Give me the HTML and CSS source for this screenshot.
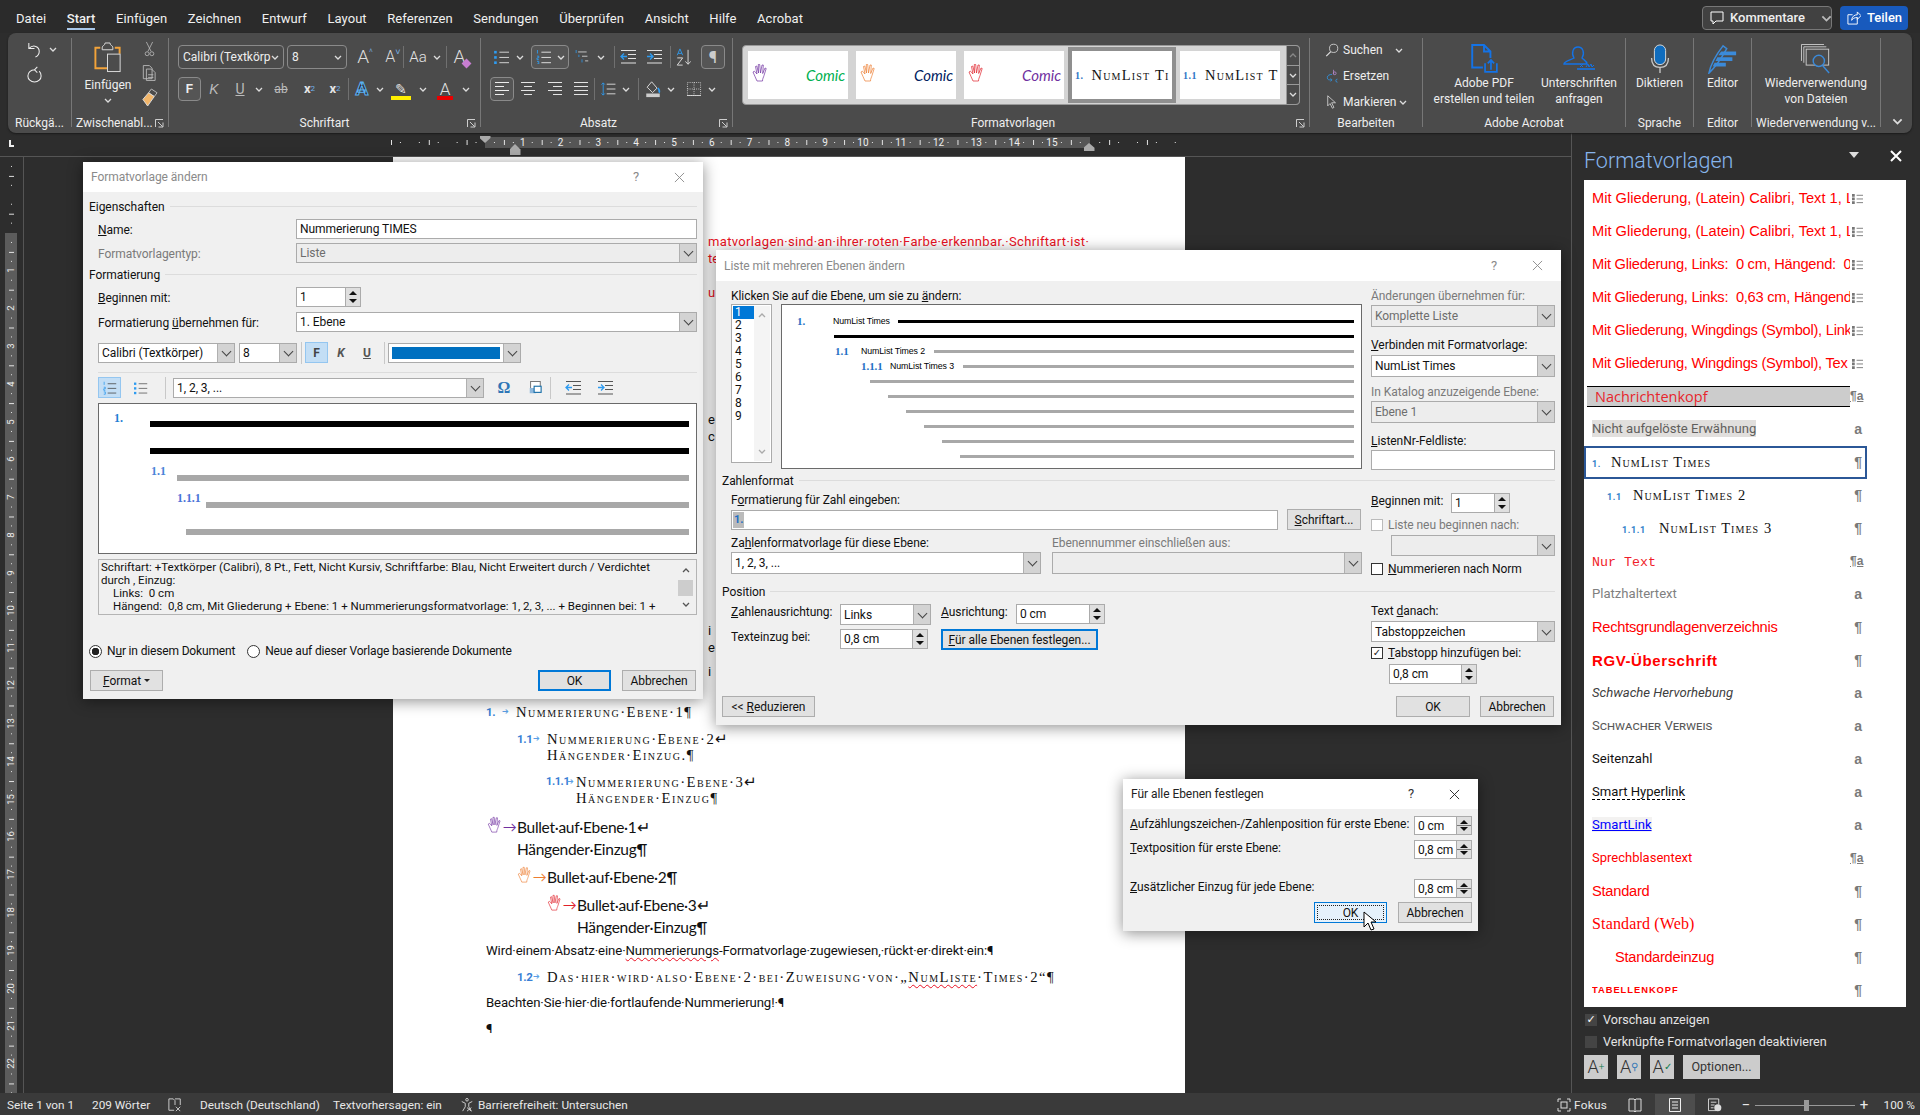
FILE: index.html
```html
<!DOCTYPE html>
<html lang="de">
<head>
<meta charset="utf-8">
<title>Word</title>
<link rel="stylesheet" href="styles.css">
</head>
<body>
<svg class="sprite" aria-hidden="true">
<symbol id="chev" viewBox="0 0 8 5"><path d="M1 1l3 3 3-3" fill="none" stroke="currentColor" stroke-width="1.3"/></symbol>
<symbol id="hand" viewBox="0 0 16 19"><path d="M5 18C4 15 2 12 1 9l1.500-.8L5 11 3.500 3.500l1.300-.5L6.500 10 6.300 1.500h1.400L8.500 10 10 2h1.300l-.6 8.500L13 5l1.200.5-2.200 7c-.5 2-1.500 3-1.500 5.500z" fill="none" stroke="currentColor" stroke-width=".7"/></symbol>
<symbol id="undo" viewBox="0 0 18 18"><path d="M3 2v6h6M3 8c5-5 11-2 11 3 0 3-2 5-4 6" fill="none" stroke="currentColor" stroke-width="1.100"/></symbol>
<symbol id="redo" viewBox="0 0 18 18"><path d="M12 1l-3 3 3 3M9 4c-4 0-7 3-7 6.500S5 17 9 17s7-3 7-6.500c0-2-1-4-2-5" fill="none" stroke="currentColor" stroke-width="1.100"/></symbol>
<symbol id="paste" viewBox="0 0 30 32"><path d="M7 6H2v21h12" fill="none" stroke="#f2a33a" stroke-width="2"/><path d="M22 6h5v6" fill="none" stroke="#f2a33a" stroke-width="2"/><path d="M9 6c0-3 3-2 3-5h5c0 3 3 2 3 5v2H9z" fill="none" stroke="#ddd"/><rect x="14.500" y="12.500" width="13" height="18" fill="#4c4c4c" stroke="#ddd"/></symbol>
<symbol id="cut" viewBox="0 0 14 20"><path d="M3 1l6 12M11 1L5 13" stroke="currentColor" fill="none"/><circle cx="4" cy="16" r="2.500" fill="none" stroke="currentColor"/><circle cx="10" cy="16" r="2.500" fill="none" stroke="currentColor"/></symbol>
<symbol id="copy" viewBox="0 0 16 20"><path d="M1.500 1.500h7l3 3v12h-10z M5 5.500h6l4 4v9H5z" fill="#4c4c4c" stroke="currentColor"/><path d="M7 12h6M7 15h6" stroke="currentColor"/></symbol>
<symbol id="painter" viewBox="0 0 18 20"><path d="M11 1l6 4-3 4-6-4z" fill="none" stroke="currentColor"/><path d="M8 5L2 12l5 7 7-10z" fill="#f2b66a" stroke="#ddd"/></symbol>
<symbol id="bullets" viewBox="0 0 18 16"><rect x="0" y="1" width="3" height="3" fill="#2e9bf0"/><rect x="0" y="7" width="3" height="3" fill="#2e9bf0"/><rect x="0" y="13" width="3" height="3" fill="#2e9bf0"/><path d="M6 2.500h11M6 8.500h11M6 14.500h11" stroke="currentColor"/></symbol>
<symbol id="numbered" viewBox="0 0 18 16"><path d="M1.500 0v4M1 7h2v2H1v2h2M1 13h2v3H1" stroke="#2e9bf0" fill="none"/><path d="M6 2.500h11M6 8.500h11M6 14.500h11" stroke="currentColor"/></symbol>
<symbol id="multi" viewBox="0 0 18 18"><path d="M1.500 0v4M5 6v3M9 12v4" stroke="#2e9bf0" fill="none"/><path d="M4 2.500h11M9 8h7M13 14h4" stroke="currentColor"/></symbol>
<symbol id="outdent" viewBox="0 0 16 14"><path d="M1 .5h15M8 4.500h8M8 8.500h8M1 13h15" stroke="currentColor"/><path d="M7 6.500H1m3-3l-3 3 3 3" stroke="#2e9bf0" fill="none" stroke-width="1.300"/></symbol>
<symbol id="indent" viewBox="0 0 16 14"><path d="M1 .5h15M8 4.500h8M8 8.500h8M1 13h15" stroke="currentColor"/><path d="M1 6.500h6m-3-3l3 3-3 3" stroke="#2e9bf0" fill="none" stroke-width="1.300"/></symbol>
<symbol id="sort" viewBox="0 0 17 20"><path d="M13 2v16m-3-3l3 3 3-3" stroke="currentColor" fill="none"/><path d="M1 8l3-7 3 7M2 6h4" stroke="#2e9bf0" fill="none"/><path d="M1 11h6l-6 8h6" stroke="currentColor" fill="none"/></symbol>
<symbol id="al" viewBox="0 0 16 14"><path d="M1 .5h14M1 4.500h9M1 8.500h14M1 12.500h9" stroke="currentColor"/></symbol>
<symbol id="ac" viewBox="0 0 16 14"><path d="M1 .5h14M4 4.500h8M1 8.500h14M4 12.500h8" stroke="currentColor"/></symbol>
<symbol id="ar" viewBox="0 0 16 14"><path d="M1 .5h14M6 4.500h9M1 8.500h14M6 12.500h9" stroke="currentColor"/></symbol>
<symbol id="aj" viewBox="0 0 16 14"><path d="M1 .5h14M1 4.500h14M1 8.500h14M1 12.500h14" stroke="currentColor"/></symbol>
<symbol id="lsp" viewBox="0 0 17 16"><path d="M3 1v14M1 3l2-2 2 2M1 13l2 2 2-2" stroke="#2e9bf0" fill="none"/><path d="M7 2.500h10M7 8h10M7 13.500h10" stroke="currentColor"/></symbol>
<symbol id="shade" viewBox="0 0 17 20"><path d="M7 2l6 7-5 5-6-6z" fill="none" stroke="currentColor"/><path d="M14 9c2 3 2 4 1 5" stroke="#2e9bf0" fill="none" stroke-width="2"/><rect x="1" y="15" width="15" height="4" fill="#ccc"/></symbol>
<symbol id="borders" viewBox="0 0 16 16"><path d="M.5.500h15v15H.500zM8 .500v15M.500 8h15" fill="none" stroke="currentColor" stroke-dasharray="1 1.500"/><path d="M0 15.500h16" stroke="currentColor"/></symbol>
<symbol id="launch" viewBox="0 0 9 9"><path d="M.5 8V.500H8M3 3l4.500 4.500M3.500 8H8V3.500" fill="none" stroke="currentColor" stroke-width=".9"/></symbol>
<symbol id="search" viewBox="0 0 17 17"><circle cx="10.500" cy="6.500" r="5" fill="none" stroke="currentColor"/><path d="M7 10.500L1.500 16" stroke="currentColor" stroke-width="1.500"/></symbol>
<symbol id="replace" viewBox="0 0 16 18"><path d="M8 7c-3 0-6 1-6 4s2 3 5 3" fill="none" stroke="#2e9bf0"/><path d="M6 12l2 2-2 2" fill="none" stroke="#2e9bf0"/><path d="M10 1v6" stroke="#b88bd0"/><circle cx="11.500" cy="5.500" r="1.800" fill="none" stroke="#b88bd0"/><path d="M15 13a2 2 0 1 0 0 4" fill="none" stroke="#2e9bf0"/></symbol>
<symbol id="cursor" viewBox="0 0 13 18"><path d="M1 1v13l3-3 3 6 2-1-3-6h5z" fill="none" stroke="currentColor"/></symbol>
<symbol id="pdf" viewBox="0 0 26 28"><path d="M12 22H2V1h11l6 6v6M13 1v6h6" fill="none" stroke="#1473e6" stroke-width="1.800"/><path d="M14 18v8h11v-8M19.500 24v-9m-3 3l3-3 3 3" fill="none" stroke="#1473e6" stroke-width="1.600"/></symbol>
<symbol id="sign" viewBox="0 0 32 28"><path d="M11 12c-3-5-1-11 4-11s7 6 4 11c2 2 5 3 5 6H1c0-3 7-4 10-6z" transform="translate(0 1)" fill="none" stroke="#1473e6" stroke-width="1.400"/><path d="M14 24h18" stroke="#1473e6" stroke-width="1.600"/><path d="M17 19l3 3m0-3l-3 3M23 22l2-3 1 3 2-3 1 3 2-2" fill="none" stroke="#1473e6"/></symbol>
<symbol id="mic" viewBox="0 0 22 32"><rect x="5" y="1" width="12" height="21" rx="6" fill="#0f6cbd" stroke="#ddd"/><path d="M2 15c0 8 4 10 9 10s9-2 9-10M11 25v6" fill="none" stroke="#ccc" stroke-width="1.400"/></symbol>
<symbol id="pen" viewBox="0 0 32 32"><path d="M1 31c2-10 8-20 15-29l4 3C15 14 9 24 1 31z" fill="none" stroke="#3b8ad9" stroke-width="1.600"/><path d="M14 8h16v4H11zM10 14h16v4H8zM7 20h12v4H5z" fill="#3b8ad9"/></symbol>
<symbol id="reuse" viewBox="0 0 32 32"><path d="M.5 18V.500h24M3 20V3h24" fill="none" stroke="#ccc"/><rect x="5.500" y="5.500" width="24" height="17" fill="none" stroke="#ccc"/><circle cx="19" cy="18" r="6" fill="#4c4c4c" stroke="#3b8ad9" stroke-width="1.500"/><path d="M23 23l7 8" stroke="#3b8ad9" stroke-width="1.500"/></symbol>
<symbol id="close" viewBox="0 0 12 12"><path d="M1 1l10 10M11 1L1 11" fill="none" stroke="currentColor" stroke-width="1"/></symbol>
<symbol id="closeb" viewBox="0 0 12 12"><path d="M1 1l10 10M11 1L1 11" fill="none" stroke="currentColor" stroke-width="2"/></symbol>
<symbol id="pcol" viewBox="0 0 12 12"><path d="M0 1h3v3H0zM0 5h3v3H0zM0 9h3v3H0z" fill="#777"/><path d="M5 2.500h7M5 6.500h7M5 10.500h7" stroke="#777"/></symbol>
<symbol id="bubble" viewBox="0 0 14 14"><path d="M1 1h12v9H6l-3 3v-3H1z" fill="none" stroke="#fff"/></symbol>
<symbol id="share" viewBox="0 0 15 15"><path d="M11 7v7H1V4h5" fill="none" stroke="#fff"/><path d="M5 10c0-4 3-6 6-6V1l4 4-4 4V7c-3 0-5 1-6 3z" fill="none" stroke="#fff"/></symbol>
<symbol id="book" viewBox="0 0 14 14"><path d="M1 1h5l1 1 1-1h5v12H8l-1 1-1-1H1zM7 2v11" fill="none" stroke="#ddd"/></symbol>
<symbol id="page" viewBox="0 0 12 14"><path d="M.5.500h11v13H.500zM3 4h6M3 7h6M3 10h6" fill="none" stroke="#eee"/></symbol>
<symbol id="web" viewBox="0 0 15 14"><path d="M9 13H.500V.500h11v6M3 4h6M3 7h4M3 10h3" fill="none" stroke="#ddd"/><circle cx="10.500" cy="10" r="3.800" fill="#ddd"/></symbol>
<symbol id="spell" viewBox="0 0 16 16"><path d="M7 14H1V1h5l2 2v5M8 1h6v7" fill="none" stroke="#ddd"/><path d="M9 10l5 5m0-5l-5 5" stroke="#ddd"/></symbol>
<symbol id="acc" viewBox="0 0 14 16"><circle cx="7" cy="2" r="1.500" fill="none" stroke="#ddd"/><path d="M1 4l4 2v4l-3 5M13 4L9 6v4l3 5" fill="none" stroke="#ddd"/><path d="M7 11l5 4m0-4l-5 4" stroke="#ddd"/></symbol>
<symbol id="focus" viewBox="0 0 14 14"><path d="M1 4V1h3M10 1h3v3M13 10v3h-3M4 13H1v-3" fill="none" stroke="#ddd"/><rect x="4" y="4" width="6" height="6" fill="none" stroke="#ddd"/></symbol>
<symbol id="mouse" viewBox="0 0 13 20"><path d="M1 1v15l4-4 3 7 3-1-3-7h5z" fill="#fff" stroke="#000"/></symbol>
<symbol id="symicon" viewBox="0 0 16 16"><rect x="3" y=".5" width="11" height="11" fill="#fff" stroke="#666"/><path d="M2 8h7v6H2z" fill="#8fb8dc"/><rect x="7" y="6" width="8" height="7" fill="#fff" stroke="#1a6fa8" stroke-width="1.300"/></symbol>
</svg>

<div class="app">
  <header class="topbar">
    <nav class="tabs">
      <span>Datei</span><span class="tab-on">Start</span><span>Einfügen</span><span>Zeichnen</span><span>Entwurf</span><span>Layout</span><span>Referenzen</span><span>Sendungen</span><span>Überprüfen</span><span>Ansicht</span><span>Hilfe</span><span>Acrobat</span>
    </nav>
    <div class="top-actions">
      <span class="btn-comments"><svg class="i14"><use href="#bubble"/></svg><b>Kommentare</b><svg class="chv-l"><use href="#chev"/></svg></span>
      <span class="btn-share"><svg class="i14"><use href="#share"/></svg><b>Teilen</b></span>
    </div>
  </header>

  <section class="ribbon">
    <div class="group g1">
      <div class="g-body g1-body">
        <div class="row-s"><svg class="i17"><use href="#undo"/></svg><svg class="chv"><use href="#chev"/></svg></div>
        <svg class="i17"><use href="#redo"/></svg>
      </div>
      <div class="g-label">Rückgä...</div>
    </div>
    <div class="group g2">
      <div class="g-body g2-body">
        <div class="paste-col"><svg class="paste"><use href="#paste"/></svg><span>Einfügen</span><svg class="chv"><use href="#chev"/></svg></div>
        <div class="clip-col"><svg class="i-cut"><use href="#cut"/></svg><svg class="i-copy"><use href="#copy"/></svg><svg class="i-paint"><use href="#painter"/></svg></div>
      </div>
      <div class="g-label g-label-l">Zwischenabl...</div>
      <svg class="launch"><use href="#launch"/></svg>
    </div>
    <div class="group g3">
      <div class="g-body g3-body">
        <div class="rrow">
          <span class="rsel w106"><span class="clip">Calibri (Textkörp</span><svg class="chv"><use href="#chev"/></svg></span>
          <span class="rsel w60 ml3">8<svg class="chv"><use href="#chev"/></svg></span>
          <span class="b b36 big-a">A<small>^</small></span><span class="b b20 big-a sm">A<small>˅</small></span><i class="rsep"></i>
          <span class="b b42 aa">Aa<svg class="chv"><use href="#chev"/></svg></span><i class="rsep"></i>
          <span class="b b30 big-a lt">A<em class="eraser"></em></span>
        </div>
        <div class="rrow r2">
          <span class="bx b23 fb">F</span><span class="b b26 ki">K</span><span class="b b26 un">U</span><span class="b b12"><svg class="chv"><use href="#chev"/></svg></span>
          <span class="b b32 strike">ab</span><span class="b b25 sc">x<sub>2</sub></span><span class="b b26 sc">x<sup>2</sup></span><i class="rsep"></i>
          <span class="b b26 fx">A</span><span class="b b10"><svg class="chv"><use href="#chev"/></svg></span>
          <span class="b b32 hl">✎</span><span class="b b12"><svg class="chv"><use href="#chev"/></svg></span>
          <span class="b b32 fc">A</span><span class="b b10"><svg class="chv"><use href="#chev"/></svg></span>
        </div>
      </div>
      <div class="g-label">Schriftart</div>
      <svg class="launch"><use href="#launch"/></svg>
    </div>
    <div class="group g4">
      <div class="g-body g4-body">
        <div class="rrow">
          <span class="b b24"><svg class="i16"><use href="#bullets"/></svg></span><span class="b b12"><svg class="chv"><use href="#chev"/></svg></span>
          <span class="bx b38 ml5"><svg class="i16"><use href="#numbered"/></svg><svg class="chv"><use href="#chev"/></svg></span>
          <span class="b b26"><svg class="i16"><use href="#multi"/></svg></span><span class="b b12"><svg class="chv"><use href="#chev"/></svg></span><i class="rsep ml7"></i>
          <span class="b b26"><svg class="i16"><use href="#outdent"/></svg></span><span class="b b26"><svg class="i16"><use href="#indent"/></svg></span><i class="rsep ml3"></i>
          <span class="b b26"><svg class="i16 tall"><use href="#sort"/></svg></span>
          <span class="bx b24 ml4 pil">¶</span>
        </div>
        <div class="rrow r2">
          <span class="bx b24"><svg class="i16"><use href="#al"/></svg></span><span class="b b27"><svg class="i16"><use href="#ac"/></svg></span><span class="b b27"><svg class="i16"><use href="#ar"/></svg></span><span class="b b26"><svg class="i16"><use href="#aj"/></svg></span><i class="rsep"></i>
          <span class="b b26"><svg class="i16"><use href="#lsp"/></svg></span><span class="b b10"><svg class="chv"><use href="#chev"/></svg></span><i class="rsep ml7"></i>
          <span class="b b27"><svg class="i16 tall"><use href="#shade"/></svg></span><span class="b b10"><svg class="chv"><use href="#chev"/></svg></span>
          <span class="b b26 ml5"><svg class="i16"><use href="#borders"/></svg></span><span class="b b10"><svg class="chv"><use href="#chev"/></svg></span>
        </div>
      </div>
      <div class="g-label g4-label">Absatz</div>
      <svg class="launch"><use href="#launch"/></svg>
    </div>
    <div class="group g5">
      <div class="g-body g5-body">
        <div class="gallery">
          <div class="gitem"><svg class="hand c-purple"><use href="#hand"/></svg><span class="comic c-green">Comic</span></div>
          <div class="gitem"><svg class="hand c-orange"><use href="#hand"/></svg><span class="comic c-navy">Comic</span></div>
          <div class="gitem"><svg class="hand c-red"><use href="#hand"/></svg><span class="comic c-violet">Comic</span></div>
          <div class="gitem gsel"><b class="gnum">1.</b><span class="gnl">NumList Ti</span></div>
          <div class="gitem"><b class="gnum">1.1</b><span class="gnl">NumList T</span></div>
          <div class="gscroll"><span class="off"><svg class="chv up"><use href="#chev"/></svg></span><span><svg class="chv"><use href="#chev"/></svg></span><span><svg class="chv"><use href="#chev"/></svg></span></div>
        </div>
      </div>
      <div class="g-label g5-label">Formatvorlagen</div>
      <svg class="launch"><use href="#launch"/></svg>
    </div>
    <div class="group g6">
      <div class="g-body g6-body">
        <div class="edit-row"><svg class="i16"><use href="#search"/></svg><span>Suchen</span><svg class="chv ml9"><use href="#chev"/></svg></div>
        <div class="edit-row"><svg class="i16"><use href="#replace"/></svg><span>Ersetzen</span></div>
        <div class="edit-row"><svg class="i16"><use href="#cursor"/></svg><span>Markieren</span><svg class="chv"><use href="#chev"/></svg></div>
      </div>
      <div class="g-label">Bearbeiten</div>
    </div>
    <div class="group g7">
      <div class="g-body g7-body">
        <div class="bigbtn w112"><svg class="bigi"><use href="#pdf"/></svg><span>Adobe PDF<br>erstellen und teilen</span></div>
        <div class="bigbtn w78"><svg class="bigi"><use href="#sign"/></svg><span>Unterschriften<br>anfragen</span></div>
      </div>
      <div class="g-label">Adobe Acrobat</div>
    </div>
    <div class="group g8">
      <div class="g-body"><div class="bigbtn"><svg class="bigi"><use href="#mic"/></svg><span>Diktieren</span></div></div>
      <div class="g-label">Sprache</div>
    </div>
    <div class="group g9">
      <div class="g-body"><div class="bigbtn"><svg class="bigi"><use href="#pen"/></svg><span>Editor</span></div></div>
      <div class="g-label">Editor</div>
    </div>
    <div class="group g10">
      <div class="g-body"><div class="bigbtn"><svg class="bigi"><use href="#reuse"/></svg><span>Wiederverwendung<br>von Dateien</span></div></div>
      <div class="g-label">Wiederverwendung v...</div>
    </div>
    <svg class="collapse"><use href="#chev"/></svg>
  </section>

  <main class="workspace">
    <div class="docarea">
      <div class="hruler">
        <span class="corner"></span>
        <div class="hr-track">
          <div class="hr-band">
            <span>1</span><span>2</span><span>3</span><span>4</span><span>5</span><span>6</span><span>7</span><span>8</span><span>9</span><span>10</span><span>11</span><span>12</span><span>13</span><span>14</span><span>15</span>
          </div>
          <i class="mk mk-a"></i><i class="mk mk-b"></i><i class="mk mk-c"></i>
        </div>
      </div>
      <div class="docrow">
        <div class="vruler">
          <div class="vr-track"><div class="vr-band">
            <span>1</span><span>2</span><span>3</span><span>4</span><span>5</span><span>6</span><span>7</span><span>8</span><span>9</span><span>10</span><span>11</span><span>12</span><span>13</span><span>14</span><span>15</span><span>16</span><span>17</span><span>18</span><span>19</span><span>20</span><span>21</span><span>22</span>
          </div></div>
        </div>
        <article class="page">
          <div class="peek">
            <p class="pk-1">matvorlagen·sind·an·ihrer·roten·Farbe·erkennbar.·Schriftart·ist·</p>
            <p>te</p>
            <p class="pk-2">u</p>
            <p class="pk-3 blk">e</p>
            <p class="blk">c</p>
            <p class="pk-4 blk">i</p>
            <p class="blk">e</p>
            <p class="pk-5 blk">i</p>
          </div>
          <div class="li l1"><b class="n">1.</b><b class="ar">➔</b><span class="sc-t">Nummerierung·Ebene·1¶</span></div>
          <div class="li l2 gap11"><b class="n">1.1</b><b class="ar">➔</b><span class="sc-t">Nummerierung·Ebene·2↵<br>Hängender·Einzug.¶</span></div>
          <div class="li l3 gap11"><b class="n">1.1.1</b><b class="ar">➔</b><span class="sc-t">Nummerierung·Ebene·3↵<br>Hängender·Einzug¶</span></div>
          <div class="li bl l1 gap10 c-green"><svg class="hand c-purple"><use href="#hand"/></svg><span class="ba c-purple">→</span><span>Bullet·auf·Ebene·1↵<br>Hängender·Einzug¶</span></div>
          <div class="li bl l2 gap6 c-navy"><svg class="hand c-orange"><use href="#hand"/></svg><span class="ba c-orange">→</span><span>Bullet·auf·Ebene·2¶</span></div>
          <div class="li bl l3 gap6 c-violet"><svg class="hand c-red"><use href="#hand"/></svg><span class="ba c-red">→</span><span>Bullet·auf·Ebene·3↵<br>Hängender·Einzug¶</span></div>
          <p class="body-p gap5">Wird·einem·Absatz·eine·<u class="wavy">Nummerierungs</u>-Formatvorlage·zugewiesen,·rückt·er·direkt·ein:¶</p>
          <div class="li l2 gap10"><b class="n">1.2</b><b class="ar">➔</b><span class="sc-t">Das·hier·wird·also·Ebene·2·bei·Zuweisung·von·„<u class="wavy">NumListe</u>·Times·2“¶</span></div>
          <p class="body-p gap10">Beachten·Sie·hier·die·fortlaufende·Nummerierung!·¶</p>
          <p class="body-p gap10">¶</p>
        </article>
      </div>
    </div>

    <aside class="pane">
      <div class="pane-head"><span class="pane-title">Formatvorlagen</span><i class="pane-drop"></i><svg class="pane-x"><use href="#closeb"/></svg></div>
      <ul class="slist">
        <li class="r s-ar s-mit"><span class="sn">Mit Gliederung, (Latein) Calibri, Text 1, L</span><svg class="sy-i"><use href="#pcol"/></svg></li>
        <li class="r s-ar s-mit"><span class="sn">Mit Gliederung, (Latein) Calibri, Text 1, L</span><svg class="sy-i"><use href="#pcol"/></svg></li>
        <li class="r s-ar"><span class="sn">Mit Gliederung, Links:&nbsp; 0 cm, Hängend:&nbsp; 0</span><svg class="sy-i"><use href="#pcol"/></svg></li>
        <li class="r s-ar"><span class="sn">Mit Gliederung, Links:&nbsp; 0,63 cm, Hängend</span><svg class="sy-i"><use href="#pcol"/></svg></li>
        <li class="r s-ar"><span class="sn">Mit Gliederung, Wingdings (Symbol), Link</span><svg class="sy-i"><use href="#pcol"/></svg></li>
        <li class="r s-ar"><span class="sn">Mit Gliederung, Wingdings (Symbol), Tex</span><svg class="sy-i"><use href="#pcol"/></svg></li>
        <li class="r"><span class="sn s-news"><span>Nachrichtenkopf</span></span><em class="sy sy-u">¶a</em></li>
        <li class="r"><span class="sn s-seg"><mark class="s-mention">Nicht aufgelöste Erwähnung</mark></span><em class="sy">a</em></li>
        <li class="r r-sel"><span class="sn s-nl"><b class="sl-n sw19">1.</b>NumList Times</span><em class="sy">¶</em></li>
        <li class="r"><span class="sn s-nl ind15"><b class="sl-n sw26">1.1</b>NumList Times 2</span><em class="sy">¶</em></li>
        <li class="r"><span class="sn s-nl ind30"><b class="sl-n sw37">1.1.1</b>NumList Times 3</span><em class="sy">¶</em></li>
        <li class="r"><span class="sn s-mono">Nur Text</span><em class="sy sy-u">¶a</em></li>
        <li class="r"><span class="sn s-seg s-gray">Platzhaltertext</span><em class="sy">a</em></li>
        <li class="r s-ar"><span class="sn">Rechtsgrundlagenverzeichnis</span><em class="sy">¶</em></li>
        <li class="r"><span class="sn s-rgv">RGV-Überschrift</span><em class="sy">¶</em></li>
        <li class="r"><span class="sn s-seg s-it">Schwache Hervorhebung</span><em class="sy">a</em></li>
        <li class="r"><span class="sn s-seg s-sv">Schwacher Verweis</span><em class="sy">a</em></li>
        <li class="r"><span class="sn s-seg">Seitenzahl</span><em class="sy">a</em></li>
        <li class="r"><span class="sn s-seg"><span class="s-dots">Smart Hyperlink</span></span><em class="sy">a</em></li>
        <li class="r"><span class="sn s-seg"><span class="s-link">SmartLink</span></span><em class="sy">a</em></li>
        <li class="r"><span class="sn s-seg s-sb">Sprechblasentext</span><em class="sy sy-u">¶a</em></li>
        <li class="r s-ar"><span class="sn">Standard</span><em class="sy">¶</em></li>
        <li class="r"><span class="sn s-web">Standard (Web)</span><em class="sy">¶</em></li>
        <li class="r s-ar"><span class="sn ind23">Standardeinzug</span><em class="sy">¶</em></li>
        <li class="r"><span class="sn s-thead">Tabellenkopf</span><em class="sy">¶</em></li>
      </ul>
      <label class="pane-chk first"><i class="pc on">✓</i>Vorschau anzeigen</label>
      <label class="pane-chk"><i class="pc"></i>Verknüpfte Formatvorlagen deaktivieren</label>
      <div class="pane-btns">
        <span class="pb">A<sub class="s-green">+</sub></span><span class="pb">A<sub class="s-blue">⚲</sub></span><span class="pb">A<sub class="s-green">✓</sub></span><span class="pb pb-wide">Optionen...</span>
      </div>
    </aside>
  </main>

  <footer class="statusbar">
    <span class="st sw85">Seite 1 von 1</span><span class="st sw76">209 Wörter</span><svg class="i14 st-i"><use href="#spell"/></svg><span class="st sw133">Deutsch (Deutschland)</span><span class="st sw127">Textvorhersagen: ein</span><svg class="i14"><use href="#acc"/></svg><span class="st ml4">Barrierefreiheit: Untersuchen</span>
    <div class="st-right">
      <svg class="i14"><use href="#focus"/></svg><span class="st fok">Fokus</span>
      <svg class="i14 vw"><use href="#book"/></svg>
      <span class="vw-on"><svg class="i14"><use href="#page"/></svg></span>
      <svg class="i14 vw2"><use href="#web"/></svg>
      <span class="zm">−</span><span class="slider"><i></i></span><span class="zm">+</span><span class="st pct">100 %</span>
    </div>
  </footer>

  <!-- Dialog 1 -->
  <section class="dlg d1">
    <div class="dlg-title"><span>Formatvorlage ändern</span><span class="q">?</span><svg class="x"><use href="#close"/></svg></div>
    <div class="d1-body">
      <div class="legend"><span>Eigenschaften</span></div>
      <div class="frow mt5"><span class="lab"><u>N</u>ame:</span><span class="fld grow">Nummerierung TIMES</span></div>
      <div class="frow mt4"><span class="lab off">Formatvorlagentyp:</span><span class="fld grow dis">Liste<i class="arr"></i></span></div>
      <div class="legend mt3"><span>Formatierung</span></div>
      <div class="frow mt5"><span class="lab"><u>B</u>eginnen mit:</span><span class="fld w65">1<i class="spn"></i></span></div>
      <div class="frow mt5"><span class="lab">Formatierung <u>ü</u>bernehmen für:</span><span class="fld grow">1. Ebene<i class="arr"></i></span></div>
      <div class="tool mt10">
        <span class="fld w137">Calibri (Textkörper)<i class="arr"></i></span>
        <span class="fld w58 ml4">8<i class="arr"></i></span><i class="tsep"></i>
        <span class="tbtn on w23 bold">F</span><span class="tbtn w26 bold ital">K</span><span class="tbtn w26 bold und">U</span><i class="tsep"></i>
        <span class="fld w133"><i class="swatch"></i><i class="arr"></i></span>
      </div>
      <div class="dhr"></div>
      <div class="tool t2">
        <span class="tbtn on w23"><svg class="i14"><use href="#numbered"/></svg></span>
        <span class="tbtn w40"><svg class="i14"><use href="#bullets"/></svg></span><i class="tsep"></i>
        <span class="fld w311 ml4">1, 2, 3, ...<i class="arr"></i></span>
        <span class="tbtn w40 omega">Ω</span><span class="tbtn w22"><svg class="i16"><use href="#symicon"/></svg></span><i class="tsep"></i>
        <span class="tbtn w32 ml3"><svg class="i16"><use href="#outdent"/></svg></span><span class="tbtn w32"><svg class="i16"><use href="#indent"/></svg></span>
      </div>
      <div class="prev1">
        <div class="pr pr-first"><b class="pn pn1">1.</b><i class="bar bk"></i></div>
        <div class="pr"><span class="ps51"></span><i class="bar bk"></i></div>
        <div class="pr"><span class="ps52"></span><b class="pn pn2">1.1</b><i class="bar gy"></i></div>
        <div class="pr"><span class="ps78"></span><b class="pn pn3">1.1.1</b><i class="bar gy"></i></div>
        <div class="pr"><span class="ps87"></span><i class="bar gy"></i></div>
      </div>
      <div class="desc">
        <div class="desc-t">Schriftart: +Textkörper (Calibri), 8 Pt., Fett, Nicht Kursiv, Schriftfarbe: Blau, Nicht Erweitert durch / Verdichtet<br>durch , Einzug:<br><span class="in">Links:&nbsp; 0 cm</span><br><span class="in">Hängend:&nbsp; 0,8 cm, Mit Gliederung + Ebene: 1 + Nummerierungsformatvorlage: 1, 2, 3, ... + Beginnen bei: 1 +</span></div>
        <div class="vs"><svg class="chv up"><use href="#chev"/></svg><i></i><svg class="chv"><use href="#chev"/></svg></div>
      </div>
      <div class="radios"><span class="rad on"></span><span>N<u>u</u>r in diesem Dokument</span><span class="rad ml7"></span><span>Neue auf dieser Vorlage basierende Dokumente</span></div>
      <div class="d1-foot"><span class="pbtn w73"><span><u>F</u>ormat</span><i class="mini"></i></span><span class="pbtn def w73 ml-auto">OK</span><span class="pbtn w74 ml11">Abbrechen</span></div>
    </div>
  </section>

  <!-- Dialog 2 -->
  <section class="dlg d2">
    <div class="dlg-title"><span>Liste mit mehreren Ebenen ändern</span><span class="q">?</span><svg class="x"><use href="#close"/></svg></div>
    <div class="d2-sec d2-top">
      <div class="d2-l">
        <div class="lb h16">Klicken Sie auf die Ebene, um sie zu <u>ä</u>ndern:</div>
        <div class="lvlwrap">
          <div class="lvl">
            <div class="lvl-n"><span class="sel">1</span><span>2</span><span>3</span><span>4</span><span>5</span><span>6</span><span>7</span><span>8</span><span>9</span></div>
            <div class="lvl-s"><svg class="chv up"><use href="#chev"/></svg><svg class="chv"><use href="#chev"/></svg></div>
          </div>
          <div class="prev2">
            <div class="q2 q2-first"><b class="qn qw36">1.</b><span class="qt qw65">NumList Times</span><i class="bar2 bk"></i></div>
            <div class="q2"><span class="qs52"></span><i class="bar2 bk"></i></div>
            <div class="q2"><span class="qs53"></span><b class="qn qw26">1.1</b><span class="qt qw73">NumList Times 2</span><i class="bar2 gy"></i></div>
            <div class="q2"><span class="qs79"></span><b class="qn qw29">1.1.1</b><span class="qt qw73">NumList Times 3</span><i class="bar2 gy"></i></div>
            <div class="q2"><span class="qs88"></span><i class="bar2 gy"></i></div>
            <div class="q2"><span class="qs106"></span><i class="bar2 gy"></i></div>
            <div class="q2"><span class="qs124"></span><i class="bar2 gy"></i></div>
            <div class="q2"><span class="qs142"></span><i class="bar2 gy"></i></div>
            <div class="q2"><span class="qs160"></span><i class="bar2 gy"></i></div>
            <div class="q2"><span class="qs178"></span><i class="bar2 gy"></i></div>
          </div>
        </div>
      </div>
      <div class="d2-r">
        <div class="lb h16 off">Änderungen übernehmen für:</div>
        <span class="fld h22 dis mt1">Komplette Liste<i class="arr"></i></span>
        <div class="lb h16 mt10"><u>V</u>erbinden mit Formatvorlage:</div>
        <span class="fld h22 mt2">NumList Times<i class="arr"></i></span>
        <div class="lb h16 off mt7">In Katalog anzuzeigende Ebene:</div>
        <span class="fld h22 dis mt1">Ebene 1<i class="arr"></i></span>
        <div class="lb h16 mt10"><u>L</u>istenNr-Feldliste:</div>
        <span class="fld mt1"></span>
      </div>
    </div>
    <div class="legend d2-leg mt2"><span>Zahlenformat</span></div>
    <div class="d2-sec">
      <div class="d2-l pt4">
        <div class="lb h16">F<u>o</u>rmatierung für Zahl eingeben:</div>
        <div class="frow mt1 rowtop">
          <span class="fld w547 ac-blue"><mark class="selnum">1.</mark></span>
          <span class="pbtn h22 w74 ml9"><span><u>S</u>chriftart...</span></span>
        </div>
        <div class="two mt5">
          <div><div class="lb h16">Za<u>h</u>lenformatvorlage für diese Ebene:</div><span class="fld h22 mt1">1, 2, 3, ...<i class="arr"></i></span></div>
          <div><div class="lb h16 off">Ebenennummer einschließen aus:</div><span class="fld h22 dis mt1"><i class="arr"></i></span></div>
        </div>
      </div>
      <div class="d2-r pt5">
        <div class="frow"><span class="lb w80 lb-up"><u>B</u>eginnen mit:</span><span class="fld w59">1<i class="spn"></i></span></div>
        <label class="chk off mt4"><i class="box dim"></i>Liste neu beginnen nach:</label>
        <span class="fld h21 dis mt2 ml20"><i class="arr"></i></span>
        <label class="chk mt5"><i class="box"></i><span><u>N</u>ummerieren nach Norm</span></label>
      </div>
    </div>
    <div class="legend d2-leg mt6"><span>Position</span></div>
    <div class="d2-sec pt4">
      <div class="d2-l pos">
        <span class="lb lbp"><u>Z</u>ahlenausrichtung:</span><span class="fld h21 w91">Links<i class="arr"></i></span><span class="lb lbp ml10"><u>A</u>usrichtung:</span><span class="fld w89">0 cm<i class="spn"></i></span>
        <span class="lb lbp">Texteinzu<u>g</u> bei:</span><span class="fld w88">0,8 cm<i class="spn"></i></span><span class="pbtn def h22 cspan"><span><u>F</u>ür alle Ebenen festlegen...</span></span>
      </div>
      <div class="d2-r">
        <div class="lb h16">Text <u>d</u>anach:</div>
        <span class="fld h21 mt2">Tabstoppzeichen<i class="arr"></i></span>
        <label class="chk mt3"><i class="box">✓</i><span><u>T</u>abstopp hinzufügen bei:</span></label>
        <span class="fld w88 ml18 mt3">0,8 cm<i class="spn"></i></span>
      </div>
    </div>
    <div class="d2-foot"><span class="pbtn h22 w93">&lt;&lt;&nbsp;<u>R</u>eduzieren</span><span class="pbtn h22 w74 ml-auto">OK</span><span class="pbtn h22 w74 ml10">Abbrechen</span></div>
  </section>

  <!-- Dialog 3 -->
  <section class="dlg d3">
    <div class="dlg-title act"><span>Für alle Ebenen festlegen</span><span class="q">?</span><svg class="x"><use href="#close"/></svg></div>
    <div class="d3-body">
      <div class="d3-row r-a"><span><u>A</u>ufzählungszeichen-/Zahlenposition für erste Ebene:</span><span class="fld w58 h19">0 cm<i class="spn"></i></span></div>
      <div class="d3-row r-b"><span><u>T</u>extposition für erste Ebene:</span><span class="fld w58 h19">0,8 cm<i class="spn"></i></span></div>
      <div class="d3-row r-c"><span><u>Z</u>usätzlicher Einzug für jede Ebene:</span><span class="fld w58 h19">0,8 cm<i class="spn"></i></span></div>
      <div class="d3-foot"><span class="pbtn h22 w73 d3ok"><span class="dotted">OK</span></span><span class="pbtn h22 w74 ml11">Abbrechen</span></div>
    </div>
  </section>
  <svg class="mouse"><use href="#mouse"/></svg>
</div>
</body>
</html>
```
FILE: styles.css
```css
*{box-sizing:border-box}
html,body{margin:0;padding:0}
body{background:#2d2d2d}
.sprite{display:none}
.app{position:relative;width:1920px;height:1115px;overflow:hidden;display:flex;flex-direction:column;background:#2d2d2d;font:12px/16px Roboto,"Liberation Sans",sans-serif;color:#eee}
svg{display:block;flex:none}
em{font-style:normal}
.i14{width:14px;height:14px}.i16{width:16px;height:14px}.i16.tall{height:18px}.i17{width:17px;height:17px}
.chv{width:8px;height:5px;color:#ddd}.chv.up{transform:rotate(180deg)}
.ml3{margin-left:3px}.ml4{margin-left:4px}.ml5{margin-left:5px}.ml7{margin-left:7px}.ml9{margin-left:9px}.ml10{margin-left:10px}.ml11{margin-left:11px}.ml18{margin-left:18px}.ml20{margin-left:20px}.ml-auto{margin-left:auto}
.mt1{margin-top:1px}.mt2{margin-top:2px}.mt3{margin-top:3px}.mt4{margin-top:4px}.mt5{margin-top:5px}.mt6{margin-top:6px}.mt7{margin-top:7px}.mt10{margin-top:10px}
.c-green{color:#00b050}.c-navy{color:#002060}.c-violet{color:#7030a0}.c-purple{color:#7030a0}.c-orange{color:#ed7d31}.c-red{color:#e0202a}

/* top bar */
.topbar{height:33px;flex:none;display:flex;justify-content:space-between;background:#2b2b2b}
.tabs{display:flex;padding-left:16px;gap:20.600px;font-size:13px;line-height:37px;letter-spacing:.05px;color:#f0f0f0}
.tabs span{white-space:nowrap}
.tab-on{font-weight:500;box-shadow:inset 0 -3px 0 -1px #a8c7ea;height:30px}
.top-actions{display:flex;gap:8px;padding:6px 12px 0 0}
.btn-comments,.btn-share{height:24px;display:flex;align-items:center;font-size:13px;border-radius:4px}
.btn-comments b,.btn-share b{font-weight:500}
.btn-comments{width:130px;padding-left:7px;gap:6px;background:#414141;border:1px solid #777}
.chv-l{width:11px;height:7px;color:#bbb;margin-left:10px}
.btn-share{width:68px;padding-left:7px;gap:6px;background:#185abd;color:#fff}

/* ribbon */
.ribbon{height:100px;flex:none;margin:0 8px;background:#4b4b4b;border-radius:8px;display:flex;position:relative;padding-top:5px;box-shadow:0 1px 2px #1b1b1b}
.group{height:89px;flex:none;position:relative;border-right:1px solid #777;display:flex;flex-direction:column}
.g-body{flex:1;min-height:0;display:flex;justify-content:center}
.g-label{position:absolute;left:0;right:0;bottom:-5px;height:18px;text-align:center;line-height:18px;color:#eee;white-space:nowrap}
.launch{position:absolute;right:4px;bottom:-1px;width:9px;height:9px;color:#ddd}
.g1{width:64px}.g2{width:97px}.g3{width:312px}.g4{width:252px}.g5{width:577px}.g6{width:113px}.g7{width:203px}.g8{width:68px}.g9{width:58px}.g10{width:129px}
.g1-body{flex-direction:column;justify-content:flex-start;gap:8px;padding:3px 0 0 18px}
.row-s{display:flex;align-items:center;gap:6px}
.g2-body{justify-content:flex-start;padding-left:4px}
.g-label-l{left:4px;right:auto}
.g4-label{right:16px}
.paste-col{width:64px;display:flex;flex-direction:column;align-items:center;padding-top:4px}
.paste{width:30px;height:31px}
.paste-col span{margin-top:4px}
.paste-col .chv{margin-top:5px}
.clip-col{display:flex;flex-direction:column;align-items:center;width:18px;padding-top:2px;color:#bdbdbd;gap:6px}
.i-cut{width:11px;height:18px}.i-copy{width:14px;height:18px}.i-paint{width:17px;height:19px}
.g3-body,.g4-body{flex-direction:column;justify-content:flex-start;padding-top:7px}
.g3-body{padding-left:9px}
.g4-body{padding-left:9px}
.rrow{display:flex;height:24px;align-items:center}
.r2{margin-top:8px}
.rsel{height:24px;display:flex;align-items:center;justify-content:space-between;border:1px solid #8a8a8a;border-radius:4px;padding:0 4px;font-size:12px}
.clip{overflow:hidden;white-space:nowrap;width:88px}
.w106{width:106px}.w60{width:60px}
.b{height:24px;display:flex;align-items:center;justify-content:center;flex:none;color:#e4e4e4}
.b10{width:10px}.b12{width:12px}.b20{width:20px}.b24{width:24px}.b25{width:25px}.b26{width:26px}.b27{width:27px}.b30{width:30px}.b32{width:32px}.b36{width:36px}.b42{width:42px}
.bx{height:24px;display:flex;align-items:center;justify-content:center;gap:5px;border:1px solid #8a8a8a;border-radius:4px;flex:none;background:#555;font-weight:700}
.b23{width:23px}.b38{width:38px}
.rsep{width:1px;height:22px;background:#707070;flex:none;display:block}
.big-a{font-size:19px;font-weight:300;color:#ddd;align-items:flex-end;line-height:24px}
.big-a small{font-size:9px;line-height:14px;align-self:flex-start;color:#7db7ee}
.big-a.sm{font-size:16px}
.eraser{display:block;width:7px;height:7px;background:#c77ed1;transform:rotate(45deg);margin:0 0 2px -2px}
.aa{font-size:15px;gap:6px;font-weight:300}
.fb{font-family:"Liberation Sans",sans-serif}
.ki{font-style:italic;font-size:14px;color:#bbb;font-family:"Liberation Sans",sans-serif}
.un{text-decoration:underline;font-size:14px;color:#bbb}
.strike{text-decoration:line-through;color:#bbb;font-size:12px}
.sc{font-weight:700;font-size:13px}
.sc sub,.sc sup{font-size:8px;color:#6fb1ec;font-weight:400;line-height:0}
.fx{font-size:19px;font-weight:700;color:#2b2b2b;-webkit-text-stroke:1px #5ab0f2}
.hl{font-size:14px;box-shadow:inset 0 -5px 0 -1px #ffef00;height:21px;margin:0 6px;width:20px}
.fc{font-size:17px;font-weight:300;box-shadow:inset 0 -5px 0 -1px #e80000;height:21px;margin:0 8px;width:16px}
.pil{font-size:17px;font-weight:400;color:#ccc}
.g5-body{justify-content:flex-start;padding:7px 0 0 9px}
.gallery{width:558px;height:60px;display:flex;gap:8px;padding:5px 0 0 5px;background:#d4d4d4;border:1px solid #999;border-radius:4px;position:relative}
.gitem{width:100px;height:48px;background:#fff;flex:none;display:flex;align-items:center;padding:0 3px;overflow:hidden}
.gsel{outline:4px solid #8f8f8f;outline-offset:0}
.hand{width:16px;height:19px;flex:none}
.gitem .hand{margin:-6px 0 0 1px}
.comic{margin-left:auto;font:italic 15px "Lato",sans-serif}
.gnum{font:700 10px "Liberation Serif",serif;color:#2e75c6;margin-right:8px;letter-spacing:.5px;flex:none}
.gnl{font:14.500px "Liberation Serif",serif;font-variant:small-caps;color:#111;letter-spacing:1.200px;white-space:nowrap}
.gscroll{position:absolute;right:-1px;top:-1px;width:14px;height:60px;display:flex;flex-direction:column;border:1px solid #999;border-radius:0 4px 4px 0;background:#4b4b4b}
.gscroll span{flex:1;display:flex;align-items:center;justify-content:center;border-bottom:1px solid #999}
.gscroll span:last-child{border:0}
.gscroll .off .chv{color:#888}
.g5-label{right:16px}
.g6-body{flex-direction:column;justify-content:flex-start;padding-left:14px;color:#eee;margin-top:-1px}
.edit-row{height:26px;display:flex;align-items:center;gap:3px;color:#ddd}
.edit-row span{color:#eee}
.bigbtn{display:flex;flex-direction:column;align-items:center;text-align:center;line-height:16px;padding-top:6px;white-space:nowrap}
.bigi{height:30px;width:32px;margin-bottom:1px}
.g7-body{justify-content:flex-start;padding-left:5px}
.w112{width:112px}.w78{width:78px}
.collapse{position:absolute;right:9px;bottom:8px;width:11px;height:7px;color:#ddd}

/* workspace */
.workspace{flex:1;min-height:0;display:flex}
.docarea{flex:1;min-width:0;display:flex;flex-direction:column}
.hruler{height:24px;flex:none;position:relative;padding:4px 0 0 390.500px;border-bottom:1px solid #555}
.corner{position:absolute;left:9px;top:7px;width:5px;height:7px;border-left:2px solid #eee;border-bottom:2px solid #eee}
.hr-track{width:793.800px;height:11px;position:relative;
 background:linear-gradient(90deg,transparent 9px,#e4e4e4 9px,#e4e4e4 10px,transparent 10px) 18.900px 50%/37.800px 1px repeat-x,
 linear-gradient(90deg,transparent 19px,#e4e4e4 19px,#e4e4e4 20px,transparent 20px) 18.900px 50%/37.800px 5px repeat-x,
 linear-gradient(90deg,transparent 28px,#e4e4e4 28px,#e4e4e4 29px,transparent 29px) 18.900px 50%/37.800px 1px repeat-x}
.hr-band{position:absolute;left:94.500px;top:0;width:604.800px;height:11px;display:flex;padding-left:18.900px;font-size:10px;line-height:11px;color:#eee;
 background:linear-gradient(90deg,transparent 9px,#e4e4e4 9px,#e4e4e4 10px,transparent 10px) 0 50%/37.800px 1px repeat-x,
 linear-gradient(90deg,transparent 19px,#e4e4e4 19px,#e4e4e4 20px,transparent 20px) 0 50%/37.800px 5px repeat-x,
 linear-gradient(90deg,transparent 28px,#e4e4e4 28px,#e4e4e4 29px,transparent 29px) 0 50%/37.800px 1px repeat-x,#555}
.hr-band span{width:37.800px;text-align:center;flex:none}
.mk{position:absolute;display:block;background:#aaa}
.mk-a{left:89px;top:-1px;width:11px;height:7px;clip-path:polygon(0 0,100% 0,100% 30%,50% 100%,0 30%)}
.mk-b{left:119px;top:7px;width:11px;height:11px;clip-path:polygon(50% 0,100% 50%,100% 100%,0 100%,0 50%)}
.mk-c{left:693px;top:6px;width:11px;height:8px;clip-path:polygon(50% 0,100% 60%,100% 100%,0 100%,0 60%)}
.docrow{flex:1;min-height:0;display:flex}
.vruler{width:24px;flex:none;padding-left:5px;border-right:1px solid #555}
.vr-track{width:12px;height:100%;position:relative;
 background:linear-gradient(180deg,transparent 9px,#ddd 9px,#ddd 10px,transparent 10px) 50% 0/1px 37.800px repeat-y,
 linear-gradient(180deg,transparent 19px,#ddd 19px,#ddd 20px,transparent 20px) 50% 0/5px 37.800px repeat-y,
 linear-gradient(180deg,transparent 28px,#ddd 28px,#ddd 29px,transparent 29px) 50% 0/1px 37.800px repeat-y}
.vr-band{position:absolute;top:75.600px;left:0;bottom:0;width:12px;padding-top:18.900px;display:flex;flex-direction:column;overflow:hidden;font-size:9.500px;line-height:12px;color:#eee;
 background:linear-gradient(180deg,transparent 9px,#e4e4e4 9px,#e4e4e4 10px,transparent 10px) 50% 0/1px 37.800px repeat-y,
 linear-gradient(180deg,transparent 19px,#e4e4e4 19px,#e4e4e4 20px,transparent 20px) 50% 0/5px 37.800px repeat-y,
 linear-gradient(180deg,transparent 28px,#e4e4e4 28px,#e4e4e4 29px,transparent 29px) 50% 0/1px 37.800px repeat-y,#5c5c5c}
.vr-band span{height:37.800px;flex:none;writing-mode:vertical-rl;transform:rotate(180deg);text-align:center}

/* page */
.page{width:792px;margin-left:369px;background:#fff;flex:none;height:936px;overflow:hidden;padding:76px 0 0 93px;color:#000}
.peek{height:471px}
.peek p{margin:0 0 0 222px;color:#e81123;white-space:nowrap;height:17px;font:13px/17px Roboto,sans-serif}
.peek .blk{color:#111}
.peek .pk-1{letter-spacing:.35px}
.peek .pk-2{margin-top:17px}
.peek .pk-3{margin-top:110px}
.peek .pk-4{margin-top:177px}
.peek .pk-5{margin-top:7px}
.li{display:flex;color:#111;font:14.670px/16px "Liberation Serif",serif;white-space:nowrap}
.l1{padding-left:0}.l2{padding-left:31px}.l3{padding-left:60px}
.gap5{margin-top:5px}.gap6{margin-top:6px}.gap10{margin-top:10px}.gap11{margin-top:11px}
.body-p.gap5{margin-top:5px}.body-p.gap10{margin-top:10px}
.li .n{width:16px;flex:none;font:700 11.500px/16px Roboto,sans-serif;color:#3a7fd5;letter-spacing:-.4px}
.li .ar{width:14px;flex:none;font:400 8px/16px "DejaVu Sans",sans-serif;color:#5aa0e6;text-align:left}
.l3 .n{width:21px;font-size:11px}.l3 .ar{width:9px}
.sc-t{font-variant:small-caps;letter-spacing:1.500px}
.bl{font:15.500px/22px Lato,sans-serif;letter-spacing:-.3px}
.bl .hand{width:15px;height:17px}
.ba{width:15px;flex:none;font-size:14px;text-align:center}
.l1.bl{padding-left:1px}.l2.bl{padding-left:31px}.l3.bl{padding-left:61px}
.body-p{margin:0;font:13.200px/16px Roboto,sans-serif;color:#111;white-space:nowrap;letter-spacing:-.1px}
.wavy{text-decoration:underline wavy #e81123 1px;text-underline-offset:2px}

/* pane */
.pane{width:349px;flex:none;border-left:1px solid #555;padding-left:12px;background:#2d2d2d}
.pane-head{height:47px;display:flex;align-items:center;position:relative;padding-top:8px}
.pane-title{font-size:21.500px;font-weight:300;color:#87b5ec}
.pane-drop{position:absolute;left:265px;top:19px;border:5px solid transparent;border-top:6px solid #ddd}
.pane-x{position:absolute;left:306px;top:17px;width:12px;height:12px;color:#fff}
.slist{list-style:none;margin:0;padding:1.500px 0 0;width:322px;height:827px;background:#fff}
.r{height:33px;width:283px;display:flex;align-items:center;padding-left:8px;color:#f00;white-space:nowrap}
.sn{width:258px;overflow:hidden;flex:none;white-space:nowrap}
.s-ar,.s-ar .sn{font:14.670px/33px "Liberation Sans",sans-serif}
.s-ar .sn{letter-spacing:-.25px}
.s-mit .sn{letter-spacing:0}
.sy{margin-left:auto;width:25px;text-align:right;padding-right:5px;color:#7a7a7a;font:700 14px/14px "Liberation Sans",sans-serif}
.sy-u{font-size:12px;font-weight:700;text-decoration:underline}
.sy-i{margin-left:auto;width:11px;height:11px;margin-right:4px}
.s-news{margin-left:-5px;width:263px;height:21px;background:#ccc;border-top:1px solid #000;border-bottom:1px solid #000;padding-left:8px;font:14.500px/19px "Open Sans",sans-serif;color:#e7262c}
.s-seg{font:13.100px/20px Roboto,sans-serif;color:#111}
.s-mention{background:#e1dfdd;color:#605e5c;padding:1px 0}
.r-sel{outline:2px solid #2b5797;outline-offset:-2px}
.s-nl{display:flex;align-items:baseline;color:#111;font:14.500px "Liberation Serif",serif;font-variant:small-caps;letter-spacing:1.050px}
.sl-n{font:700 9px Roboto,sans-serif;color:#2f80c9;letter-spacing:.6px;flex:none}
.sw19{width:19px}.sw26{width:26px}.sw37{width:37px}
.ind15{padding-left:15px}.ind30{padding-left:30px}.ind23{padding-left:23px}
.s-mono{font:13.330px "Liberation Mono",monospace;color:#f01d2a;padding-top:2px}
.s-gray{color:#808080}
.s-rgv{font:700 15px "Liberation Sans",sans-serif;letter-spacing:.6px}
.s-it{font-style:italic;color:#404040}
.s-sv{font-variant:small-caps;color:#595959}
.s-dots{border-bottom:1px dashed #000}
.s-link{color:#0000ff;text-decoration:underline;background:#f3f2f1}
.s-sb{color:#f00;font-size:13px}
.s-web{font:16px "Liberation Serif",serif;letter-spacing:.15px}
.s-thead{font:700 9.300px "Liberation Sans",sans-serif;text-transform:uppercase;letter-spacing:1px}
.pane-chk{display:flex;height:22px;align-items:center;gap:6px;font-size:12.600px;color:#e4e4e4;margin-left:1px}
.pane-chk.first{margin-top:2px}
.pc{width:12px;height:12px;background:#444;font:normal 11px/12px "DejaVu Sans",sans-serif;color:#fff;text-align:center;display:block}
.pane-btns{display:flex;gap:9px;margin-top:2px}
.pb{width:24px;height:24px;background:#ccc;color:#333;display:flex;align-items:center;justify-content:center;font-size:18px;font-weight:300}
.pb sub{font-size:10px;line-height:0}
.s-green{color:#0a7a4a}.s-blue{color:#2e75b6}
.pb-wide{width:77px;font-size:12.500px;font-weight:400}

/* status */
.statusbar{height:22px;flex:none;background:#3a3a3a;display:flex;align-items:center;padding:2px 0 0 7px;color:#e8e8e8;font-size:11.800px}
.st{white-space:nowrap;flex:none}
.sw85{width:85px}.sw76{width:76px}.sw133{width:133px}.sw127{width:127px}
.st-i{margin-right:18px}
.st-right{margin-left:auto;display:flex;align-items:center;height:20px}
.fok{margin:0 0 0 3px;width:54px;letter-spacing:.3px}
.vw{margin-right:13px}
.vw-on{width:40px;height:22px;background:#4d4d4d;display:flex;align-items:center;justify-content:center}
.vw2{margin:0 19px 0 13px}
.zm{width:10px;text-align:center;font-size:15px}
.slider{width:100px;height:1px;background:#999;margin:0 4px;position:relative;display:block}
.slider i{position:absolute;left:49px;top:-5px;width:5px;height:11px;background:#999}
.pct{width:42px;margin-left:9px;padding-right:5px;text-align:right}

/* dialogs */
.dlg{position:absolute;background:#f0f0f0;color:#111;box-shadow:0 2px 14px rgba(0,0,0,.45);font:12px/16px Roboto,"Liberation Sans",sans-serif;letter-spacing:-.05px}
.dlg-title{height:30px;background:#fff;display:flex;align-items:center;padding-left:8px;color:#8a8a8a;position:relative;font-size:12px}
.d2 .dlg-title{height:31px}
.q{position:absolute;right:64px;font-size:13px;color:#8a8a8a}
.x{position:absolute;right:18px;width:11px;height:11px;color:#8a8a8a}
.act{color:#222}.act .q{color:#333}.act .x{color:#222}
.d1{left:83px;top:162px;width:620px;height:537px}
.d1-body{padding:6px 6px 0}
.legend{height:16px;display:flex;align-items:center;gap:5px;white-space:nowrap}
.legend span{padding-top:2px}
.legend::after{content:"";flex:1;height:1px;background:#dcdcdc}
.frow{display:flex;align-items:center;padding-left:9px}
.rowtop{padding-left:0}
.lab{width:198px;flex:none;padding-top:2px}
.off{color:#7a7a7a}
.fld{display:flex;align-items:center;height:20px;background:#fff;border:1px solid #ababab;padding-left:3px;flex:none;white-space:nowrap;overflow:hidden;font-size:12px}
.grow{flex:1}
.dis{background:#ededed;color:#6d6d6d}
.arr{margin-left:auto;width:17px;align-self:stretch;background:#d3d3d3;border-left:1px solid #b0b0b0;position:relative;flex:none;display:block}
.arr::before{content:"";position:absolute;left:5px;top:calc(50% - 5px);width:6px;height:6px;border-right:1px solid #444;border-bottom:1px solid #444;transform:rotate(45deg)}
.spn{margin-left:auto;width:15px;align-self:stretch;background:linear-gradient(#dfdfdf 48%,#777 48%,#777 52%,#dfdfdf 52%);border-left:1px solid #ababab;position:relative;flex:none;display:block}
.spn::before,.spn::after{content:"";position:absolute;left:3px;border:4px solid transparent}
.spn::before{top:-1px;border-bottom:4px solid #111}
.spn::after{bottom:-1px;border-top:4px solid #111}
.w22{width:22px}.w23{width:23px}.w26{width:26px}.w32{width:32px}.w40{width:40px}.w58{width:58px}.w59{width:59px}.w65{width:65px}.w73{width:73px}.w74{width:74px}.w80{width:80px}.w88{width:88px}.w89{width:89px}.w91{width:91px}.w93{width:93px}.w133{width:133px}.w137{width:137px}.w311{width:311px}.w547{width:547px}
.h16{height:16px}.h19{height:19px}.h21{height:21px}.h22{height:22px}
.tool{display:flex;align-items:center;padding-left:9px;height:21px}
.t2{margin-top:4px}
.tsep{width:1px;height:22px;background:#c8c8c8;margin:0 3px 0 4px;flex:none;display:block}
.tbtn{height:21px;display:flex;align-items:center;justify-content:center;flex:none;color:#555;font-size:12px}
.tbtn.on{background:#c3def5;border:1px solid #94c6f0;color:#444}
.bold{font-weight:700}.ital{font-style:italic;color:#555}.und{text-decoration:underline;color:#555}
.swatch{width:108px;height:12px;background:#0070c0;display:block;flex:none}
.omega{font:700 16px "Liberation Serif",serif;color:#2e75b6}
.dhr{height:1px;background:#dcdcdc;margin:9px 0 0 9px}
.prev1{margin:5px 0 0 9px;height:151px;background:#fff;border:1px solid #6a6a6a}
.pr{height:27px;display:flex;align-items:flex-end;padding-right:7px}
.pr-first{height:23px}
.pn{align-self:flex-start;flex:none;font:700 12px/12px "Liberation Serif",serif;color:#1f7fd4}
.pn1{width:51px;padding-left:15px;margin-top:8px}
.pn2{width:26px;margin-top:11px;color:#4a84d8}
.pn3{width:29px;margin-top:11px;color:#4a74d8}
.ps51{width:51px}.ps52{width:52px}.ps78{width:78px}.ps87{width:87px}
.bar{flex:1;height:6px;display:block}
.bk{background:#000}.gy{background:#a8a8a8}
.desc{margin:5px 0 0 9px;height:56px;border:1px solid #b4b4b4;display:flex;padding:1px 2px}
.desc-t{flex:1;font-size:11.500px;line-height:13px;white-space:nowrap;letter-spacing:.02px;overflow:hidden}
.in{padding-left:12px}
.vs{width:17px;display:flex;flex-direction:column;align-items:center;justify-content:space-between;padding:7px 0 6px;background:#f0f0f0}
.vs .chv{color:#555}
.vs i{width:15px;height:16px;background:#cdcdcd;display:block}
.radios{display:flex;align-items:center;gap:5px;height:16px;margin-top:28px;white-space:nowrap;letter-spacing:-.16px}
.rad{width:13px;height:13px;border:1px solid #333;border-radius:50%;background:#fff;flex:none}
.rad.on{background:radial-gradient(circle,#222 3.500px,#fff 4px)}
.d1-foot{display:flex;margin-top:11px;padding:0 1px}
.pbtn{height:21px;background:#e1e1e1;border:1px solid #adadad;display:flex;align-items:center;justify-content:center;flex:none;white-space:nowrap}
.def{border:2px solid #0078d7}
.mini{border:3px solid transparent;border-top:3px solid #222;margin:3px 0 0 3px;display:block}
.d2{left:716px;top:250px;width:845px;height:475px}
.d2-sec{display:flex;padding:0 6px 0 15px;gap:9px}
.d2-top{padding-top:7px}
.d2-l{width:631px;flex:none}
.d2-r{width:184px;flex:none;display:flex;flex-direction:column}
.d2-r>.fld{align-self:stretch}
.d2-r>.w88{align-self:flex-start}
.lb{display:block;white-space:nowrap;padding-top:1px;line-height:15px}
.d2-r .lb-up{padding-top:0;margin-top:-3px}
.lvlwrap{display:flex;gap:9px}
.lvl{width:41px;height:159px;background:#fff;border:1px solid #ababab;display:flex;padding:1px}
.lvl-n{width:21px;display:flex;flex-direction:column}
.lvl-n span{height:13px;line-height:13px;padding-left:2px;font-size:12px}
.lvl-n .sel{background:#0078d7;color:#fff}
.lvl-s{flex:1;background:#f4f4f4;display:flex;flex-direction:column;justify-content:space-between;align-items:center;padding:7px 0}
.lvl-s .chv{color:#aaa}
.prev2{width:581px;height:165px;background:#fff;border:1px solid #6a6a6a;padding-right:7px}
.q2{height:15px;display:flex;align-items:flex-end}
.q2-first{height:18px;padding-left:15px}
.qn{font:700 11px/13px "Liberation Serif",serif;color:#1f6fc4;flex:none;margin-bottom:-5px}
.qt{font:8.800px/11px "Liberation Sans",sans-serif;color:#000;flex:none;letter-spacing:-.1px;margin-bottom:-4px;white-space:nowrap}
.qw26{width:26px}.qw29{width:29px}.qw36{width:36px}.qw65{width:65px}.qw73{width:73px}
.bar2{flex:1;height:3px;display:block}
.qs52{width:52px}.qs53{width:53px}.qs79{width:79px}.qs88{width:88px}.qs106{width:106px}.qs124{width:124px}.qs142{width:142px}.qs160{width:160px}.qs178{width:178px}
.d2-leg{padding:0 6px}
.pt4{padding-top:4px}.pt5{padding-top:5px}
.ac-blue{height:20px;padding-left:1px}
.selnum{background:#bbb;color:#1f6fc4;font-weight:700;padding:0 1px;font-size:11px}
.two{display:grid;grid-template-columns:310px 310px;gap:11px}
.two .fld{width:100%}
.d2-r .frow{padding-left:0}
.chk{display:flex;align-items:center;gap:5px;height:16px;white-space:nowrap}
.box{width:12px;height:12px;background:#fff;border:1px solid #333;font:normal 10px/10px "DejaVu Sans",sans-serif;text-align:center;display:block;flex:none;color:#222}
.box.dim{border-color:#bbb}
.pos{display:grid;grid-template-columns:109px 91px 85px 89px;grid-template-rows:21px 22px;row-gap:4px;align-items:start;justify-items:start;padding-top:1px}
.pos .fld{height:20px}
.pos .fld.h21{height:21px}
.lbp{line-height:15px}
.cspan{grid-column:3 / 5;width:157px;margin-left:10px}
.d2-foot{display:flex;padding:0 7px 0 6px;margin-top:12px}
.d3{left:1123px;top:779px;width:355px;height:152px}
.d3-body{padding:7px 6px 0 7px}
.d3-row{display:flex;justify-content:space-between;align-items:flex-start;line-height:16px;white-space:nowrap}
.r-b{margin-top:5px}.r-c{margin-top:20px}
.d3-foot{display:flex;justify-content:flex-end;margin-top:4px}
.d3ok{background:#e5f1fb;border-color:#0078d7;padding:2px}
.dotted{flex:1;height:100%;border:1px dotted #222;display:flex;align-items:center;justify-content:center}
.mouse{position:absolute;left:1363px;top:911px;width:13px;height:20px}
```
